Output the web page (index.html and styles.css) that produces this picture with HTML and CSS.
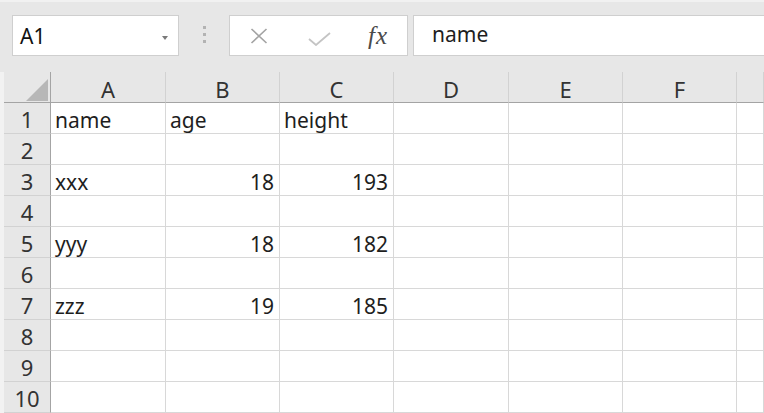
FILE: index.html
```html
<!DOCTYPE html>
<html lang="en">
<head>
<meta charset="utf-8">
<title>Sheet</title>
<link rel="stylesheet" href="styles.css">
</head>
<body>
<div class="app">
  <div class="toolbar">
    <div class="namebox">
      <span class="ref">A1</span>
      <span class="caret"></span>
    </div>
    <div class="grip"><i></i><i></i><i></i></div>
    <div class="fxbox">
      <span class="fxitem cancel">
        <svg width="18" height="16" viewBox="0 0 18 16"><path d="M1.5 1 L16.5 15 M16.5 1 L1.5 15" stroke="#a3a3a3" stroke-width="1.6" fill="none"/></svg>
      </span>
      <span class="fxitem enter">
        <svg width="24" height="14" viewBox="0 0 24 14"><path d="M1 7 L8 13 L22 1" stroke="#c4c4c4" stroke-width="1.8" fill="none"/></svg>
      </span>
      <span class="fxitem fx">fx</span>
    </div>
    <div class="formula">name</div>
  </div>
  <div class="sheet">
    <div class="corner"><span class="tri"></span></div>
    <div class="colhead">A</div>
    <div class="colhead">B</div>
    <div class="colhead">C</div>
    <div class="colhead">D</div>
    <div class="colhead">E</div>
    <div class="colhead">F</div>
    <div class="colhead"></div>

    <div class="rowhead">1</div>
    <div class="cell">name</div><div class="cell">age</div><div class="cell">height</div><div class="cell"></div><div class="cell"></div><div class="cell"></div><div class="cell"></div>

    <div class="rowhead">2</div>
    <div class="cell"></div><div class="cell"></div><div class="cell"></div><div class="cell"></div><div class="cell"></div><div class="cell"></div><div class="cell"></div>

    <div class="rowhead">3</div>
    <div class="cell">xxx</div><div class="cell num">18</div><div class="cell num">193</div><div class="cell"></div><div class="cell"></div><div class="cell"></div><div class="cell"></div>

    <div class="rowhead">4</div>
    <div class="cell"></div><div class="cell"></div><div class="cell"></div><div class="cell"></div><div class="cell"></div><div class="cell"></div><div class="cell"></div>

    <div class="rowhead">5</div>
    <div class="cell">yyy</div><div class="cell num">18</div><div class="cell num">182</div><div class="cell"></div><div class="cell"></div><div class="cell"></div><div class="cell"></div>

    <div class="rowhead">6</div>
    <div class="cell"></div><div class="cell"></div><div class="cell"></div><div class="cell"></div><div class="cell"></div><div class="cell"></div><div class="cell"></div>

    <div class="rowhead">7</div>
    <div class="cell">zzz</div><div class="cell num">19</div><div class="cell num">185</div><div class="cell"></div><div class="cell"></div><div class="cell"></div><div class="cell"></div>

    <div class="rowhead">8</div>
    <div class="cell"></div><div class="cell"></div><div class="cell"></div><div class="cell"></div><div class="cell"></div><div class="cell"></div><div class="cell"></div>

    <div class="rowhead">9</div>
    <div class="cell"></div><div class="cell"></div><div class="cell"></div><div class="cell"></div><div class="cell"></div><div class="cell"></div><div class="cell"></div>

    <div class="rowhead">10</div>
    <div class="cell"></div><div class="cell"></div><div class="cell"></div><div class="cell"></div><div class="cell"></div><div class="cell"></div><div class="cell"></div>
  </div>
</div>
</body>
</html>
```

FILE: styles.css
```css
* { box-sizing: border-box; }

html, body {
  margin: 0;
  padding: 0;
  background: #f2f2f2;
  overflow: hidden;
}

body {
  width: 764px;
  height: 413px;
  font-family: "Noto Sans", "Liberation Sans", sans-serif;
  color: #1e1e1e;
}

.app {
  display: flex;
  flex-direction: column;
}

/* ---------- formula bar ---------- */
.toolbar {
  height: 72px;
  background: #e7e7e7;
  border-top: 2px solid #f1f1f1;
  padding: 13px 0 0 12px;
  display: flex;
  align-items: flex-start;
}

.namebox {
  width: 167px;
  height: 41px;
  background: #fff;
  border: 1px solid #cfcfcf;
  display: flex;
  align-items: flex-start;
  justify-content: space-between;
  padding: 8px 10px 0 7px;
}

.ref {
  font-size: 21px;
  line-height: 24px;
  color: #111;
}

.caret {
  margin-top: 12px;
  width: 0;
  height: 0;
  border-left: 3.5px solid transparent;
  border-right: 3.5px solid transparent;
  border-top: 4px solid #7a7a7a;
}

.grip {
  width: 50px;
  height: 41px;
  display: flex;
  flex-direction: column;
  align-items: center;
  gap: 4px;
  padding-top: 11px;
}

.grip i {
  display: block;
  width: 3px;
  height: 3px;
  background: #b3b3b3;
}

.fxbox {
  width: 179px;
  height: 41px;
  background: #fff;
  border: 1px solid #cfcfcf;
  display: flex;
  align-items: center;
}

.fxitem {
  display: flex;
  justify-content: center;
  align-items: center;
}

.cancel { width: 58px; padding-top: 1px; }
.enter { width: 64px; padding-top: 6px; }
.fx {
  width: 52px;
  font-family: "Liberation Serif", "DejaVu Serif", serif;
  font-style: italic;
  font-size: 25px;
  letter-spacing: 1px;
  color: #4a4a4a;
  line-height: 24px;
  padding-top: 1px;
}

.formula {
  flex: 1;
  height: 41px;
  margin-left: 5px;
  background: #fff;
  border: 1px solid #cfcfcf;
  border-right: none;
  padding: 6px 0 0 18px;
  font-size: 21px;
  line-height: 24px;
  color: #1e1e1e;
}

/* ---------- grid ---------- */
.sheet {
  margin-left: 4px;
  display: grid;
  grid-template-columns: 47px 115px 114px 114px 115px 114px 114px 1fr;
  grid-auto-rows: 31px;
  background: #fff;
}

.corner,
.colhead {
  background: #e7e7e7;
  border-bottom: 1px solid #a4a4a4;
  border-right: 1px solid #d2d2d2;
  font-size: 22px;
  line-height: 24px;
  color: #333;
  text-align: center;
  padding-top: 5px;
}

.corner {
  border-right: 1px solid #a4a4a4;
  position: relative;
}

.tri {
  position: absolute;
  right: 2px;
  bottom: 1px;
  width: 0;
  height: 0;
  border-left: 22px solid transparent;
  border-bottom: 22px solid #b7b7b7;
}

.rowhead {
  background: #e7e7e7;
  border-right: 1px solid #a4a4a4;
  border-bottom: 1px solid #d2d2d2;
  font-size: 22px;
  line-height: 24px;
  color: #333;
  text-align: center;
  padding-top: 4px;
}

.cell {
  border-right: 1px solid #d8d8d8;
  border-bottom: 1px solid #d8d8d8;
  font-size: 21px;
  line-height: 24px;
  padding: 5px 5px 0 4px;
  color: #1e1e1e;
  white-space: nowrap;
}

.num {
  text-align: right;
}
```
